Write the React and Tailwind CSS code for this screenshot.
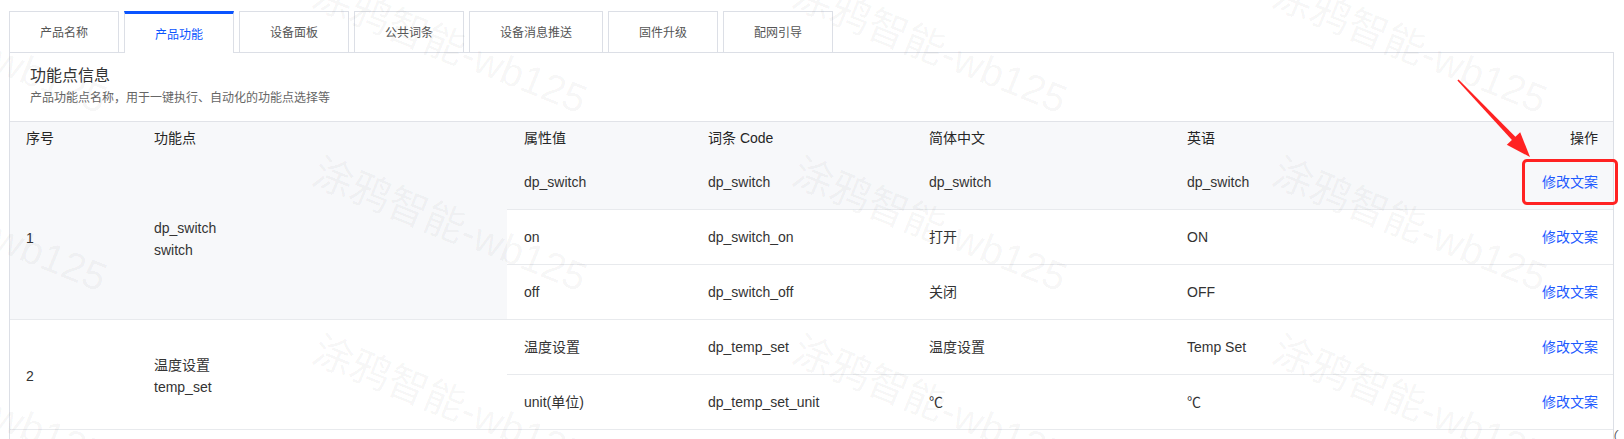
import React from 'react';

const TABS = ['产品名称', '产品功能', '设备面板', '公共词条', '设备消息推送', '固件升级', '配网引导'];

const GROUPS = [
  {
    no: '1',
    name: 'dp_switch',
    code: 'switch',
    hover: true,
    rows: [
      ['dp_switch', 'dp_switch', 'dp_switch', 'dp_switch'],
      ['on', 'dp_switch_on', '打开', 'ON'],
      ['off', 'dp_switch_off', '关闭', 'OFF'],
    ],
  },
  {
    no: '2',
    name: '温度设置',
    code: 'temp_set',
    rows: [
      ['温度设置', 'dp_temp_set', '温度设置', 'Temp Set'],
      ['unit(单位)', 'dp_temp_set_unit', '℃', '℃'],
    ],
  },
];

// watermark grid: 480px across, 178px down
const MARKS = [];
for (let j = -1; j <= 2; j++) {
  for (let k = -2; k <= 1; k++) {
    MARKS.push({ left: 795 + 480 * k, top: 150 + 178 * j });
  }
}

function Tabs() {
  return (
    <div className="relative z-10 -mb-px flex gap-[5px] pl-[9px] pt-[11px]">
      {TABS.map((t, i) => {
        const active = i === 1;
        return active ? (
          <div
            key={t}
            className="flex h-[42px] items-center border-x border-t-[3px] border-x-[#dcdfe6] border-t-[#0a54ff] bg-white px-[30px] pt-[2px] text-[12px] text-[#0a54ff]"
          >
            {t}
          </div>
        ) : (
          <div
            key={t}
            className="flex h-[42px] items-center border border-[#dcdfe6] bg-white px-[30px] pt-[2px] text-[12px] text-[#555]"
          >
            {t}
          </div>
        );
      })}
    </div>
  );
}

function HeaderRow() {
  return (
    <div className="flex h-[33px] items-center bg-[#f7f8fa] text-[14px] text-[#262626]">
      <div className="w-[144px] pl-[16px]">序号</div>
      <div className="w-[353px]">功能点</div>
      <div className="flex flex-1 items-center pl-[17px] pr-[15px]">
        <div className="w-[184px]">属性值</div>
        <div className="w-[221px]">词条 Code</div>
        <div className="w-[258px]">简体中文</div>
        <div className="flex-1">英语</div>
        <div className="text-right">操作</div>
      </div>
    </div>
  );
}

function Group({ g }) {
  return (
    <div className="flex border-b border-[#e8eaed] text-[14px] text-[#333]">
      <div className={`flex w-[497px] items-center pt-[3px] ${g.hover ? 'bg-[#f7f8fa]' : 'bg-white'}`}>
        <div className="w-[144px] pl-[16px]">{g.no}</div>
        <div className="leading-[22px]">
          <div>{g.name}</div>
          <div>{g.code}</div>
        </div>
      </div>
      <div className="flex flex-1 flex-col">
        {g.rows.map((r, i) => (
          <div
            key={i}
            className={`flex h-[55px] items-center border-b border-[#e8eaed] pl-[17px] pr-[15px] last:h-[54px] last:border-b-0 ${
              g.hover && i === 0 ? 'bg-[#f7f8fa]' : 'bg-white'
            }`}
          >
            <div className="w-[184px]">{r[0]}</div>
            <div className="w-[221px]">{r[1]}</div>
            <div className="w-[258px]">{r[2]}</div>
            <div className="flex-1">{r[3]}</div>
            <a className="cursor-pointer text-right text-[#1e5bff]">修改文案</a>
          </div>
        ))}
      </div>
    </div>
  );
}

export default function App() {
  return (
    <div className="relative h-[439px] w-[1624px] overflow-hidden bg-white [font-family:'Liberation_Sans','Noto_Sans_CJK_SC',sans-serif]">
      <Tabs />
      <div className="ml-[9px] h-[420px] w-[1605px] border-x border-t border-[#dcdfe6]">
        <div className="border-b border-[#e1e3e8] px-[20px] pb-[14px] pt-[12px]">
          <div className="text-[16px] leading-[22px] text-[#333]">功能点信息</div>
          <div className="mt-[2px] text-[12px] leading-[18px] text-[#666]">
            产品功能点名称，用于一键执行、自动化的功能点选择等
          </div>
        </div>
        <HeaderRow />
        {GROUPS.map((g) => (
          <Group key={g.no} g={g} />
        ))}
      </div>

      {/* watermark */}
      <div className="pointer-events-none absolute inset-0 z-20 overflow-hidden">
        {MARKS.map((m, i) => (
          <span
            key={i}
            className="absolute origin-left rotate-[22deg] whitespace-nowrap text-[40px] leading-[40px] text-black/[0.045]"
            style={{ left: m.left, top: m.top }}
          >
            涂鸦智能-wb125
          </span>
        ))}
      </div>

      {/* annotation */}
      <div className="pointer-events-none absolute left-[1522px] top-[159px] z-30 h-[46px] w-[96px] rounded-[5px] border-[3px] border-[#ff2222]" />
      <svg className="pointer-events-none absolute left-0 top-0 z-30" width="1624" height="439">
        <polygon
          points="1457.4,80.6 1458.6,79.4 1515.6,137 1512.4,140.4"
          fill="#ff2222"
        />
        <polygon points="1530,157 1506.8,144.8 1520.2,132.2" fill="#ff2222" />
      </svg>
      <span className="absolute left-[1614px] top-[426px] text-[11px] italic text-[#555]">(</span>
    </div>
  );
}
